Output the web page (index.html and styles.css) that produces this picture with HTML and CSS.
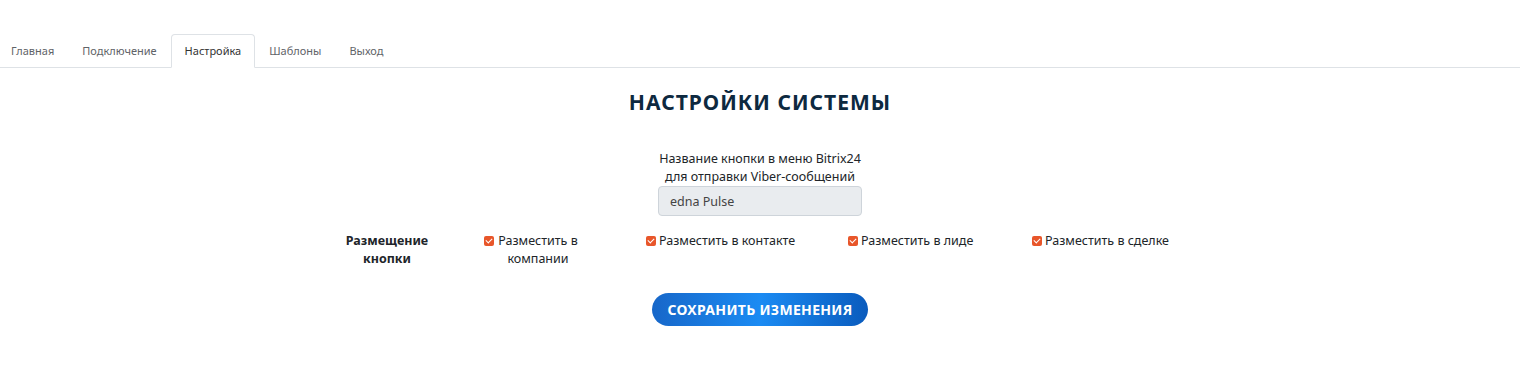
FILE: index.html
```html
<!DOCTYPE html>
<html lang="ru">
<head>
    <meta charset="UTF-8">
    <title>Настройки системы</title>
    <link rel="stylesheet" href="styles.css">
</head>
<body>
    <!-- Tabs -->
    <ul class="nav-tabs">
        <li class="nav-item">Главная</li>
        <li class="nav-item">Подключение</li>
        <li class="nav-item active">Настройка</li>
        <li class="nav-item">Шаблоны</li>
        <li class="nav-item">Выход</li>
    </ul>

    <div class="settings">
        <h1 class="settings-title">Настройки системы</h1>

        <div class="field">
            <label class="field-label">Название кнопки в меню Bitrix24<br>для отправки Viber-сообщений</label>
            <input class="field-input" type="text" value="edna Pulse" readonly>
        </div>

        <div class="placement">
            <div class="placement-label">Размещение<br>кнопки</div>
            <label class="check check-narrow"><span class="check-box"></span><span class="check-text">Разместить в компании</span></label>
            <label class="check"><span class="check-box"></span><span class="check-text">Разместить в контакте</span></label>
            <label class="check"><span class="check-box"></span><span class="check-text">Разместить в лиде</span></label>
            <label class="check"><span class="check-box"></span><span class="check-text">Разместить в сделке</span></label>
        </div>

        <div class="actions">
            <button class="btn-save">Сохранить изменения</button>
        </div>
    </div>
</body>
</html>
```

FILE: styles.css
```css
:root {
    --text-dark: #212529;
    --text-muted: #5f6368;
    --title-navy: #0d2940;
    --border: #dee2e6;
    --input-bg: #e9ecef;
    --input-border: #ced4da;
    --check-orange: #e8562a;
}

* {
    margin: 0;
    padding: 0;
    box-sizing: border-box;
}

body {
    font-family: "Noto Sans", "Open Sans", sans-serif;
    color: var(--text-dark);
    background: #ffffff;
    padding-top: 34px;
}

/* Tabs */
.nav-tabs {
    display: flex;
    list-style: none;
    border-bottom: 1px solid var(--border);
}

.nav-item {
    font-size: 11px;
    line-height: 16px;
    padding: 8px 13px;
    color: var(--text-muted);
    border: 1px solid transparent;
    border-radius: 4px 4px 0 0;
    margin-bottom: -1px;
}

.nav-item:first-child {
    padding-left: 10px;
}

.nav-item.active {
    color: #333333;
    background: #ffffff;
    border-color: var(--border) var(--border) #ffffff;
}

/* Page */
.settings {
    display: flex;
    flex-direction: column;
    align-items: center;
}

.settings-title {
    margin-top: 20px;
    font-size: 21px;
    line-height: 28px;
    font-weight: 700;
    text-transform: uppercase;
    letter-spacing: 1px;
    color: var(--title-navy);
}

.field {
    display: flex;
    flex-direction: column;
    align-items: center;
    margin-top: 34px;
}

.field-label {
    font-size: 12.5px;
    line-height: 18px;
    text-align: center;
}

.field-input {
    width: 204px;
    height: 30px;
    padding: 0 11px;
    font-family: inherit;
    font-size: 12.5px;
    color: #444;
    background: var(--input-bg);
    border: 1px solid var(--input-border);
    border-radius: 4px;
    outline: none;
}

.placement {
    display: grid;
    grid-template-columns: 144px 162px 202px 184px 148px;
    width: 840px;
    margin-top: 16px;
    font-size: 12.5px;
    line-height: 18px;
}

.placement-label {
    width: 94px;
    font-weight: 700;
    text-align: center;
}

.check {
    display: flex;
    align-items: flex-start;
}

.check-narrow .check-text {
    width: 80px;
    text-align: center;
}

.check-box {
    flex-shrink: 0;
    width: 10px;
    height: 10px;
    margin: 4px 3px 0 0;
    border-radius: 2px;
    background: var(--check-orange);
    position: relative;
}

.check-narrow .check-box {
    margin-right: 4px;
}

.check-box::after {
    content: "";
    position: absolute;
    left: 3px;
    top: 1px;
    width: 3px;
    height: 5px;
    border: solid #ffffff;
    border-width: 0 1.5px 1.5px 0;
    transform: rotate(45deg);
}

.actions {
    margin-top: 25px;
}

.btn-save {
    width: 216px;
    height: 33px;
    border: none;
    border-radius: 17px;
    font-family: inherit;
    font-size: 14px;
    font-weight: 700;
    letter-spacing: 0.3px;
    text-transform: uppercase;
    color: #ffffff;
    background: linear-gradient(90deg, #1767c9 0%, #1b8bf3 50%, #0a5bbd 100%);
    cursor: pointer;
}
```
